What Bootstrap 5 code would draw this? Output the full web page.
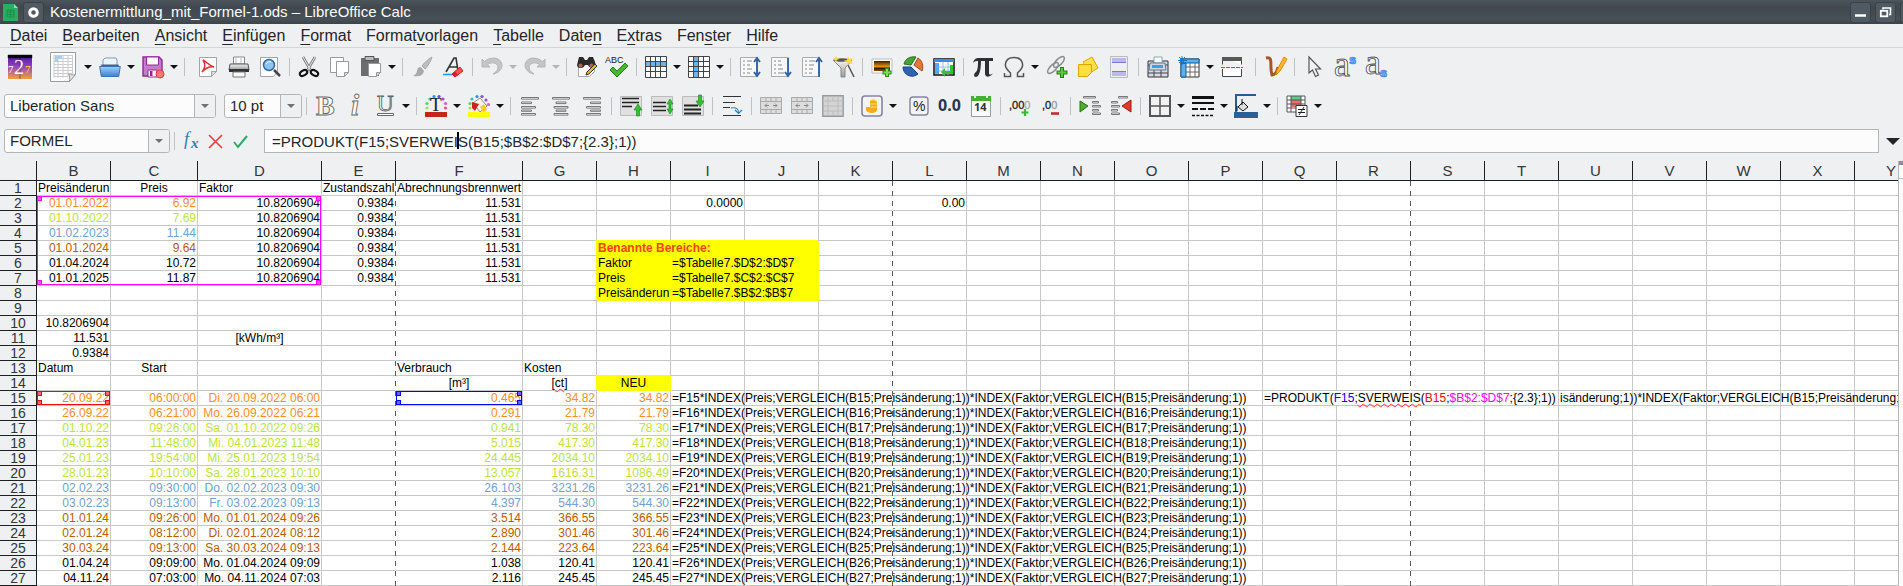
<!DOCTYPE html>
<html lang="de">
<head>
<meta charset="utf-8">
<meta name="viewport" content="width=device-width, initial-scale=1">
<title>Kostenermittlung_mit_Formel-1.ods – LibreOffice Calc</title>
<link href="https://cdn.jsdelivr.net/npm/bootstrap@5.3.0/dist/css/bootstrap.min.css" rel="stylesheet">
<style>
  :root { --chrome:#eff0f1; --ink:#232629; --grid:#c8c8c8; --head:#1d1f21; }
  body { font-family:"Liberation Sans",Arial,sans-serif; color:var(--ink); background:var(--chrome); font-size:15px; line-height:1.2; }
  svg { display:block; overflow:visible; }
  button { border:0; background:transparent; padding:0; color:inherit; }

  .titlebar { height:24px; background:linear-gradient(#4d555c,#40474e 30%,#475057 80%,#3c444b); color:#fcfcfc; padding-left:3px; }
  .wbtn { width:21px; height:21px; border:1px solid #3a4249; border-radius:3px; background:#505a62; }
  .wbtn-end { width:3px; height:21px; border:1px solid #3a4249; border-right:0; border-radius:3px 0 0 3px; background:#505a62; }
  .caption { margin-left:6px; }

  .menubar { height:24px; border-bottom:1px solid #d3d5d7; gap:15px; padding-left:10px; font-size:16px; }
  .menubar a { color:var(--ink); text-decoration:none; }
  .menubar u { text-decoration-thickness:1px; text-underline-offset:3px; }

  .tools { height:39px; padding-bottom:2px; }
  .tools button { height:30px; display:flex; align-items:center; justify-content:center; }
  .tb { width:31px; flex:none; }
  .tb-wide { width:39px; flex:none; }
  .tb-slim { width:30px; flex:none; }
  .dd { width:12px; flex:none; }
  .dd::before, .combo-arrow::before { content:""; border:4px solid transparent; border-top:4px solid #111; border-bottom:0; }
  .dd:disabled::before { border-top-color:#b4b5b6; }
  .combo-arrow::before { border-top-color:#6f7173; }
  .vsep { width:8px; height:18px; flex:none; background:linear-gradient(#bfc1c3,#bfc1c3) center/1px 100% no-repeat; }

  .combo { height:24px; border:1px solid #b3b5b6; border-radius:3px; background:#fcfcfc; overflow:hidden; flex:none; }
  .combo select { appearance:none; border:0; background:transparent; padding:0 5px; flex:1 1 0; min-width:0; color:var(--ink); outline:0; font-size:15px; }
  .combo-arrow { width:21px; border-left:1px solid #b3b5b6; background:var(--chrome); pointer-events:none; }
  .c-font { width:212px; } .c-size { width:78px; } .c-name { width:166px; }

  .formulabar { height:35px; padding:3px 3px 8px 4px; }
  .fx-btn { width:25px; height:24px; flex:none; display:flex; align-items:center; justify-content:center; }
  .fx-edit { position:relative; height:24px; margin-left:11px; border:1px solid #b3b5b6; background:#fcfcfc; flex:1 1 0; min-width:0; }
  .fx-edit input { width:100%; height:22px; border:0; background:transparent; padding:0 7px; font-size:15px; color:var(--ink); outline:0; display:block; }
  .fx-caret { position:absolute; left:192px; top:2px; width:2px; height:17px; background:#000; }
  .expand { width:14px; margin-left:7px; }
  .expand::before { content:""; display:block; border:7px solid transparent; border-top-color:var(--ink); border-bottom:0; }

  .gridwrap { flex:1 1 0; min-width:0; overflow:hidden; background:#fff; }
  .sheet { table-layout:fixed; width:100%; border-collapse:separate; border-spacing:0; font-size:12px; color:#000; }
  .sheet th, .sheet td { height:15px; padding:0; line-height:14px; border-right:1px solid var(--grid); border-bottom:1px solid var(--grid); white-space:nowrap; font-weight:400; }
  .sheet th { background:var(--chrome); border-color:var(--head); color:#31363b; font-size:14px; text-align:center; }
  .sheet thead th { height:20px; line-height:19px; font-size:15px; position:relative; }
  .sheet tr > :last-child { border-right:0; }
  .sheet thead th:last-child { text-align:right; padding-right:2px; }
  .sheet tbody td { padding:0 1px; }
  .sheet .brk { border-right-color:transparent; }
  .sheet thead .brk { border-right-color:var(--head); }
  .sheet thead .brk::after { content:""; position:absolute; right:-1px; top:20px; width:1px; height:405px; z-index:2;
    background:repeating-linear-gradient(#5a5a5a 0 5px,transparent 5px 10px); }
  .num { text-align:right; } .mid { text-align:center; }
  .yel { background:#ff0; border-color:#ff0 !important; box-shadow:-1px -1px 0 #ff0; }
  .sheet td.hd { color:#ff420e; font-weight:700; }
  .k-or { color:#ff8c26; } .k-gr { color:#bbe33d; } .k-bl { color:#729fcf; } .k-br { color:#b85c00; }
  .host { position:relative; }
  .wavy { text-decoration:underline wavy #f33 1px; text-underline-offset:1px; }

  .ref { position:absolute; left:0; top:0; z-index:3; border:1px solid var(--rc); pointer-events:none; }
  .ref i { position:absolute; width:5px; height:5px; background:var(--rf); border:1px solid var(--rc); }
  .ref i:nth-child(1) { left:-1px; top:-1px; } .ref i:nth-child(2) { right:-1px; top:-1px; }
  .ref i:nth-child(3) { left:-1px; bottom:-1px; } .ref i:nth-child(4) { right:-1px; bottom:-1px; }
  .ref-m { --rc:#f0f; --rf:#f5f; width:284px; height:89px; }
  .ref-r { --rc:#f00; --rf:#f66; width:73px; height:14px; }
  .ref-b { --rc:#00f; --rf:#66f; width:126px; height:14px; }
  .editor { position:absolute; left:0; top:0; z-index:3; width:294px; height:14px; padding-left:1px; background:#fff; color:#000; }

  .scroller { width:5px; flex:none; border-left:1px solid #b3b5b6; background:#fcfcfc; }
  .scroller .knob { height:4px; background:#8d8f91; }
  .scroller .step { height:14px; border-bottom:1px solid #c4c6c8; }
</style>
</head>
<body class="overflow-hidden">

<svg width="0" height="0" class="position-absolute" aria-hidden="true">
  <defs>
    <linearGradient id="gBlue" x2="0" y2="1"><stop stop-color="#9fd0fa"/><stop offset="1" stop-color="#3c80cf"/></linearGradient>
    <linearGradient id="gGrey" x2="0" y2="1"><stop stop-color="#f4f4f4"/><stop offset="1" stop-color="#9a9a9a"/></linearGradient>
    <linearGradient id="gSun" x2="0" y2="1"><stop stop-color="#4a10a0"/><stop offset=".45" stop-color="#8f3fc0"/><stop offset="1" stop-color="#f0a040"/></linearGradient>
    <linearGradient id="gDusk" x2="0" y2="1"><stop stop-color="#3a2000"/><stop offset=".6" stop-color="#f39a10"/><stop offset=".7" stop-color="#221500"/><stop offset="1" stop-color="#8a4f00"/></linearGradient>
  </defs>
</svg>

<header>
  <div class="titlebar d-flex align-items-center">
    <svg width="16" height="19" viewBox="0 0 16 19"><path d="M0 1h11l4 4v13H0z" fill="#27ae60"/><path d="M11 1l4 4h-4z" fill="#8fdcb0"/><path d="M4 7h7v7H4zM4 9h7M4 11.500h7M7.500 7v7" fill="none" stroke="#1c8f4c"/></svg>
    <button class="wbtn ms-1 d-flex align-items-center justify-content-center" aria-label="Fenstermenü"><svg width="11" height="11" viewBox="0 0 11 11"><circle cx="5.500" cy="5.500" r="3.800" fill="none" stroke="#fff" stroke-width="3"/></svg></button>
    <span class="caption flex-grow-1">Kostenermittlung_mit_Formel-1.ods – LibreOffice Calc</span>
    <button class="wbtn me-1 d-flex align-items-center justify-content-center" aria-label="Minimieren"><svg width="13" height="13" viewBox="0 0 13 13"><path d="M1 9.500h11" stroke="#fff" stroke-width="2.500"/></svg></button>
    <button class="wbtn me-1 d-flex align-items-center justify-content-center" aria-label="Wiederherstellen"><svg width="13" height="13" viewBox="0 0 13 13" fill="none" stroke="#fff"><path d="M4 3.500V2h7.500v6.500H10" stroke-width="1.600"/><rect x="1.800" y="4.800" width="6.500" height="5.500" stroke-width="1.800"/></svg></button>
    <div class="wbtn-end"></div>
  </div>

  <nav class="menubar d-flex align-items-center">
    <a href="#"><u>D</u>atei</a><a href="#"><u>B</u>earbeiten</a><a href="#"><u>A</u>nsicht</a><a href="#"><u>E</u>infügen</a><a href="#"><u>F</u>ormat</a><a href="#">Format<u>v</u>orlagen</a><a href="#"><u>T</u>abelle</a><a href="#">Date<u>n</u></a><a href="#">E<u>x</u>tras</a><a href="#">Fen<u>s</u>ter</a><a href="#"><u>H</u>ilfe</a>
  </nav>
</header>

<!-- Standard toolbar -->
<div class="tools d-flex align-items-center ps-1" role="toolbar" aria-label="Standard">
  <button class="tb" aria-label="727"><svg width="24" height="24" viewBox="0 0 24 24"><path fill="url(#gSun)" d="M0 0h24v24H0z"/><path d="M0 0h24v3H0zM12 0v24" stroke="#201030" stroke-width=".5"/><text x="6" y="19" font-family="Liberation Serif" font-size="20" fill="#fff">2</text><text x="0" y="18" font-family="Liberation Serif" font-size="11" fill="#fff">7</text><text x="17" y="18" font-family="Liberation Serif" font-size="11" fill="#ffe020">7</text></svg></button>
  <button class="tb-wide ms-2" aria-label="Neu"><svg width="26" height="30" viewBox="0 0 26 30"><path d="M.5.500h25v22l-6 7H.5z" fill="#fdfdfd" stroke="#9a9c9e"/><path d="M4 3.500h19M4 6.500h19M4 9.500h19M4 12.500h19M4 15.500h19M4 18.500h19M4 21.500h18M4 24.500h14M4 3v23M8 3v23M13 3v23M18 3v21M22.500 3v19" stroke="#ccc" fill="none"/><path d="M5 4h7v3H8v3H5z" fill="#a8cdf2"/><path d="M19.500 29.500c.5-3 0-6-1-7.500 2 1 5 1.200 7 .5z" fill="#e8e8e8" stroke="#9a9c9e"/></svg></button><button class="dd" aria-label="Neu, Auswahl"></button>
  <button class="tb" aria-label="Öffnen"><svg width="22" height="22" viewBox="0 0 22 22"><path d="M6 2h11l1 2v8H4V4z" fill="#eef4fb" stroke="#7a9cc4"/><path d="M2.500 8.500h17l1 4H1.500z" fill="#555f6c"/><path d="M.7 10.500h20.600l-1.600 10H2.300z" fill="url(#gBlue)" stroke="#3b72b8"/></svg></button><button class="dd" aria-label="Öffnen, Auswahl"></button>
  <button class="tb" aria-label="Speichern"><svg width="22" height="22" viewBox="0 0 22 22"><path d="M1 1h16l3 3v16H1z" fill="#c77bcb" stroke="#8e2a98" stroke-width="1.400"/><path d="M4.500 1v8h12V1z" fill="#fff" stroke="#8e2a98"/><path d="M6 21v-7h9v7z" fill="#fff" stroke="#8e2a98"/><path d="M8 15h2.500v5H8z" fill="#8e2a98"/><circle cx="18" cy="18" r="4" fill="#f77" stroke="#e33"/></svg></button><button class="dd" aria-label="Speichern, Auswahl"></button>
  <div class="vsep"></div>
  <button class="tb ms-1" aria-label="PDF"><svg width="22" height="22" viewBox="0 0 22 22"><path d="M2.500 1.500h17v14l-5 5h-12z" fill="#fff" stroke="#a2a4a6"/><path d="M6 4c4 2 5 5 11 7-5-1-8 1-12 5 3-4 4-7 1-12" fill="none" stroke="#e03030" stroke-width="1.500"/><path d="M14.500 20.500v-5h5z" fill="#ddd" stroke="#a2a4a6"/></svg></button>
  <button class="tb" aria-label="Drucken"><svg width="22" height="22" viewBox="0 0 22 22"><path d="M5.500 1h11v7h-11z" fill="#fff" stroke="#888"/><path d="M8 2v5M13 2v5" stroke="#ddd" stroke-width="2"/><path d="M2 8h18l1 6H1z" fill="url(#gGrey)" stroke="#555"/><path d="M1 13h20v3H1z" fill="#333"/><path d="M5 16h12v5H5z" fill="#f8f8f8" stroke="#777"/></svg></button>
  <button class="tb" aria-label="Druckvorschau"><svg width="22" height="22" viewBox="0 0 22 22"><path d="M1.500 1.500h17v14l-4 5h-13z" fill="#fff" stroke="#a2a4a6"/><path d="M15 14l6 6" stroke="#444" stroke-width="2.500"/><circle cx="10" cy="9" r="5.500" fill="#8cc6f0" stroke="#34699e" stroke-width="1.500"/><path d="M7 8c1-2 3-3 5-2" stroke="#fff" fill="none"/></svg></button>
  <div class="vsep"></div>
  <button class="tb" aria-label="Ausschneiden"><svg width="22" height="22" viewBox="0 0 22 22"><path d="M5 1l8 14M17 1L9 15" stroke="#777" stroke-width="2.600"/><path d="M5 1l8 14M17 1L9 15" stroke="#eee"/><ellipse cx="5.500" cy="17" rx="4" ry="2.500" transform="rotate(-30 5.500 17)" fill="none" stroke="#111" stroke-width="2"/><ellipse cx="16.500" cy="17" rx="4" ry="2.500" transform="rotate(30 16.500 17)" fill="none" stroke="#111" stroke-width="2"/></svg></button>
  <button class="tb" aria-label="Kopieren"><svg width="22" height="22" viewBox="0 0 22 22" fill="#fff" stroke="#999"><path d="M1.500 1.500h13v11l-4 4h-9z"/><path d="M7.500 5.500h12v11l-4 4h-8z"/><path d="M15.500 20.500v-4h4z" fill="#ddd"/></svg></button>
  <button class="tb" aria-label="Einfügen"><svg width="22" height="22" viewBox="0 0 22 22"><path d="M1 2h18v18H1z" fill="#6b6d6f"/><path d="M5 .5h9v4H5z" fill="#bbb" stroke="#555"/><path d="M8.500 7.500h12v9l-4 4h-8z" fill="#fff" stroke="#999"/><path d="M16.500 20.500v-4h4z" fill="#ddd" stroke="#999"/></svg></button><button class="dd" aria-label="Einfügen, Auswahl"></button>
  <div class="vsep"></div>
  <button class="tb" aria-label="Format übertragen"><svg width="22" height="22" viewBox="0 0 22 22"><path d="M21 1c-4 2-8 6-10 9l3 3c3-3 6-8 7-12z" fill="#bdbdbd" stroke="#aaa"/><path d="M10 11c-3 0-4 2-4 4s-2 4-4 5c5 1 10 0 11-5z" fill="#a9a9a9"/></svg></button>
  <button class="tb" aria-label="Formatierung löschen"><svg width="22" height="22" viewBox="0 0 22 22"><path d="M4 16L12 2h2l2 13M7 11h8" stroke="#333" stroke-width="1.600" fill="none"/><path d="M1 18.500h9" stroke="#1d99f3" stroke-width="1.500"/><path d="M10 18l8-7 3 4-8 6z" fill="#ef5350" stroke="#d22"/><path d="M10 18l3-2.500 3 3.500-3 2z" fill="#c62828"/></svg></button>
  <div class="vsep"></div>
  <button class="tb" disabled aria-label="Rückgängig"><svg width="24" height="20" viewBox="0 0 24 20"><path d="M2 2v8h8L7.500 7.500C11 5 17 5 18 10c0 3-2 5-5 7 6-1 9-5 9-9C21 0 11-1 4.500 4.500z" fill="#c4c5c6" stroke="#b4b5b6"/></svg></button><button class="dd" disabled aria-label="Rückgängig, Liste"></button>
  <button class="tb" disabled aria-label="Wiederholen"><svg width="24" height="20" viewBox="0 0 24 20"><path transform="translate(24) scale(-1 1)" d="M2 2v8h8L7.500 7.500C11 5 17 5 18 10c0 3-2 5-5 7 6-1 9-5 9-9C21 0 11-1 4.500 4.500z" fill="#c4c5c6" stroke="#b4b5b6"/></svg></button><button class="dd" disabled aria-label="Wiederholen, Liste"></button>
  <div class="vsep"></div>
  <button class="tb" aria-label="Suchen"><svg width="22" height="22" viewBox="0 0 22 22"><path d="M3.500 4.500h16v11l-5 5h-11z" fill="#fff" stroke="#aaa"/><path d="M4 1h4l2 3h2l2-3h4l3 8c0 4-7 4-8 0h-3c-1 4-8 4-8 0z" fill="#2a2a2a"/><circle cx="5.500" cy="9.500" r="2" fill="#a06a50"/><circle cx="16.500" cy="9.500" r="2" fill="#a06a50"/><path d="M11 19l1-3 8-8 2 2-8 8z" fill="#f7b21a" stroke="#333"/></svg></button>
  <button class="tb" aria-label="Rechtschreibung"><svg width="22" height="22" viewBox="0 0 22 22"><text x="-1" y="7" font-size="9" fill="#222">ABC</text><path d="M4 14l3-3 4 4 8-8 3 3-11 11z" fill="#45b82c" stroke="#2c7d1c"/></svg></button>
  <div class="vsep"></div>
  <button class="tb" aria-label="Zeile"><svg width="22" height="22" viewBox="0 0 22 22"><path d="M.5.500h21v21H.5z" fill="#fff"/><path d="M1 6h20v5H1z" fill="#6fb3e8"/><path d="M.5.500h21v21H.5zM1 5.500h20M1 10.500h20M1 15.500h20M5.500 1v20M10.500 1v20M15.500 1v20" fill="none" stroke="#444"/></svg></button><button class="dd" aria-label="Zeile, Auswahl"></button>
  <button class="tb" aria-label="Spalte"><svg width="22" height="22" viewBox="0 0 22 22"><path d="M.5.500h21v21H.5z" fill="#fff"/><path d="M6 1h5v20H6z" fill="#6fb3e8"/><path d="M.5.500h21v21H.5zM1 5.500h20M1 10.500h20M1 15.500h20M5.500 1v20M10.500 1v20M15.500 1v20" fill="none" stroke="#444"/></svg></button><button class="dd" aria-label="Spalte, Auswahl"></button>
  <div class="vsep"></div>
  <button class="tb" aria-label="Sortieren"><svg width="22" height="22" viewBox="0 0 22 22"><path d="M1.500 1.500h17v19h-17z" fill="#f8f8f8" stroke="#aaa"/><path d="M4 5h2m2 0h5M4 9h2m2 0h3M4 13h2m2 0h5M4 17h2m2 0h3" stroke="#888"/><path d="M18 4v14M15 6l3-4 3 4M15 16l3 4 3-4" fill="none" stroke="#2a5fa8" stroke-width="1.800"/></svg></button>
  <button class="tb" aria-label="Aufsteigend"><svg width="22" height="22" viewBox="0 0 22 22"><path d="M1.500 1.500h17v19h-17z" fill="#f8f8f8" stroke="#aaa"/><path d="M4 5h2m2 0h3M4 9h2m2 0h4M4 13h2m2 0h5M4 17h2m2 0h6" stroke="#888"/><path d="M18 2v16M15 16l3 4 3-4" fill="none" stroke="#2a5fa8" stroke-width="1.800"/></svg></button>
  <button class="tb" aria-label="Absteigend"><svg width="22" height="22" viewBox="0 0 22 22"><path d="M1.500 1.500h17v19h-17z" fill="#f8f8f8" stroke="#aaa"/><path d="M4 5h2m2 0h6M4 9h2m2 0h5M4 13h2m2 0h4M4 17h2m2 0h3" stroke="#888"/><path d="M18 4v17M15 6l3-4 3 4" fill="none" stroke="#2a5fa8" stroke-width="1.800"/></svg></button>
  <button class="tb" aria-label="AutoFilter"><svg width="22" height="22" viewBox="0 0 22 22"><path d="M1 4h19l-7 8v9H9v-9z" fill="url(#gGrey)" stroke="#888"/><ellipse cx="10" cy="4" rx="8" ry="1.800" fill="#555"/><path d="M16 9l6 12" stroke="#555" stroke-width="1.500"/><path d="M16 0l1 3 4-1-2 3 2 3-4-1-2 3v-4l-4-1 4-1zM4 0l1 2 2 1-2 1-1 2-1-2-2-1 2-1z" fill="#ffd93b"/></svg></button>
  <div class="vsep"></div>
  <button class="tb" aria-label="Bild"><svg width="22" height="22" viewBox="0 0 22 22"><path d="M1 3h20v14H1z" fill="#fff" stroke="#bbb"/><path d="M3 5h16v10H3z" fill="url(#gDusk)"/><path d="M16 12v9M11.500 16.500h9" stroke="#2f8d1c" stroke-width="4"/><path d="M16 13v7M12.500 16.500h7" stroke="#7fe04f" stroke-width="2"/></svg></button>
  <button class="tb" aria-label="Diagramm"><svg width="22" height="22" viewBox="0 0 22 22"><path d="M9 9L2 8C3 3 8 0 14 1z" fill="#43a535" stroke="#2a6e20"/><path d="M12 9l4-7c4 2 6 8 4 13z" fill="#e2783a" stroke="#a5451a"/><path d="M9 11l7 7c-6 5-15 1-15-7z" fill="#2f64b5" stroke="#1c3f78"/></svg></button>
  <button class="tb" aria-label="Pivot-Tabelle"><svg width="22" height="22" viewBox="0 0 22 22"><path d="M1 3h20v16H1z" fill="#fff" stroke="#111" stroke-width="1.500"/><path d="M1 3h20v3H1z" fill="#3b8be8"/><path d="M2 7h4v11H2z" fill="#5aa5f5"/><path d="M6 11h14M6 15h14M10 6v13M15 6v13" stroke="#9ab8e8"/><path d="M8 16l4-4v3h5V9h3v9h-8v3z" fill="#34c52c"/></svg></button>
  <div class="vsep"></div>
  <button class="tb" aria-label="Formelobjekt"><svg width="22" height="22" viewBox="0 0 22 22"><path d="M1 7c1-4 3-5 6-5h14v3h-4v12c0 2 2 2 4 0-1 3-7 6-8 1V5H9c0 6-1 16-5 16-3 0-2-4 0-5 2-2 2-7 2-11-2 0-3 0-5 2z" fill="#2b3035"/></svg></button>
  <button class="tb" aria-label="Sonderzeichen"><svg width="22" height="22" viewBox="0 0 22 22"><path d="M1.500 17v3.500h6V17C3 13 2 10 2.500 8 3 4 6 1.500 11 1.500S19 4 19.500 8c.5 2-.5 5-5 9v3.500h6V17" fill="none" stroke="#555" stroke-width="1.500"/></svg></button><button class="dd" aria-label="Sonderzeichen, Auswahl"></button>
  <button class="tb" aria-label="Hyperlink"><svg width="22" height="22" viewBox="0 0 22 22"><g fill="none" stroke="#8a8c8e" stroke-width="1.500"><ellipse cx="13" cy="6" rx="7" ry="3" transform="rotate(-45 13 6)"/><ellipse cx="7" cy="12" rx="7" ry="3" transform="rotate(-45 7 12)"/></g><path d="M16 11v11M10.500 16.500h11" stroke="#287d1c" stroke-width="4"/><path d="M16 12v9M11.500 16.500h9" stroke="#58cc3f" stroke-width="2"/></svg></button>
  <button class="tb" aria-label="Kommentar"><svg width="22" height="22" viewBox="0 0 22 22" stroke="#d8a800"><path d="M6 6l9-5 6 11-8 5z" fill="#ffe14d"/><path d="M1.500 8.500h13v8l-4 4h-9z" fill="#ffdf3f"/></svg></button>
  <button class="tb" aria-label="Kopf- und Fußzeile"><svg width="22" height="22" viewBox="0 0 22 22"><path d="M2.500.500h17v21h-17z" fill="#eee" stroke="#bbb"/><path d="M4 2h14v4H4zM4 16h14v4H4z" fill="#b9b9ea"/><path d="M4 6.500h14M4 15.500h14" stroke="#7a7acd"/></svg></button>
  <div class="vsep"></div>
  <button class="tb" aria-label="Druckbereich"><svg width="22" height="22" viewBox="0 0 22 22"><path d="M1 5h20v16H1z" fill="#d9d9ec" stroke="#333"/><path d="M1 17h20M7 5v16M14 5v16M1 9h20" stroke="#444"/><path d="M7 1h8v6H7z" fill="#fff" stroke="#8aa"/><path d="M3 7h15l1 7H2z" fill="#ccd8e6" stroke="#678"/><path d="M5 9h11v3H5z" fill="#3d9cf0"/></svg></button>
  <button class="tb" aria-label="Fixieren"><svg width="22" height="22" viewBox="0 0 22 22"><path d="M3 3h18v18H3z" fill="#fff" stroke="#333"/><path d="M3 3h18v4H3zM3 7h5v14H3z" fill="#5eaee8" stroke="#0c5fa5"/><path d="M8 11h13M8 16h13M12 7v14M17 7v14" stroke="#666"/><path d="M4 0v9M0 4.500h9M1 1l6 6M7 1L1 7" stroke="#1377c9"/></svg></button><button class="dd" aria-label="Fixieren, Auswahl"></button>
  <button class="tb" aria-label="Fenster teilen"><svg width="22" height="22" viewBox="0 0 22 22"><path d="M1.500 1.500h19v7M1.500 8.500v-7M1.500 13v7.500h19V13" fill="#fff" stroke="#444"/><path d="M1 1h20v4H1z" fill="#555b50"/><path d="M0 11.500h22" stroke="#2980b9" stroke-dasharray="4 1"/></svg></button>
  <div class="vsep ms-1"></div>
  <button class="tb" aria-label="Zeichnen"><svg width="22" height="22" viewBox="0 0 22 22"><path d="M2 2c8-2 3 8 6 17 3 0 5-4 6-8" fill="none" stroke="#a8542a" stroke-width="3"/><path d="M12 19l1-5 7-13 3 2-7 12z" fill="#ffb62e" stroke="#e08a00"/></svg></button>
  <div class="vsep"></div>
  <button class="tb" aria-label="Auswählen"><svg width="22" height="22" viewBox="0 0 22 22"><path d="M6 1v16l3.500-3 3 6.500 3-1.500-3-6h5z" fill="#f2f2f2" stroke="#555" stroke-width="1.200"/></svg></button>
  <button class="tb" aria-label="Hochgestellt"><svg width="22" height="22" viewBox="0 0 22 22"><text x="0" y="20" font-family="Liberation Serif" font-size="36" fill="#fff" stroke="#555" stroke-width=".9">a</text><text x="15" y="8" font-size="13" font-weight="700" fill="#8ec0ff" stroke="#2a7df0" stroke-width=".7">s</text></svg></button>
  <button class="tb" aria-label="Tiefgestellt"><svg width="22" height="22" viewBox="0 0 22 22"><text x="0" y="18" font-family="Liberation Serif" font-size="36" fill="#fff" stroke="#555" stroke-width=".9">a</text><text x="15" y="21" font-size="13" font-weight="700" fill="#8ec0ff" stroke="#2a7df0" stroke-width=".7">s</text></svg></button>
</div>

<!-- Formatting toolbar -->
<div class="tools d-flex align-items-center ps-1" role="toolbar" aria-label="Formatierung">
  <div class="combo c-font d-flex"><select aria-label="Schriftname"><option>Liberation Sans</option></select><span class="combo-arrow d-flex align-items-center justify-content-center"></span></div>
  <div class="combo c-size d-flex ms-2"><select aria-label="Schriftgröße"><option>10 pt</option></select><span class="combo-arrow d-flex align-items-center justify-content-center"></span></div>
  <div class="vsep"></div>
  <button class="tb-slim" aria-label="Fett"><svg width="22" height="22" viewBox="0 0 22 22"><text x="2" y="20" font-family="Liberation Serif" font-weight="700" font-size="28" fill="#fff" stroke="#666" stroke-width=".9">B</text></svg></button>
  <button class="tb-slim" aria-label="Kursiv"><svg width="22" height="22" viewBox="0 0 22 22"><text x="7" y="20" font-family="Liberation Serif" font-style="italic" font-weight="700" font-size="29" fill="#fff" stroke="#666" stroke-width=".9">i</text></svg></button>
  <button class="tb-slim" aria-label="Unterstrichen"><svg width="22" height="22" viewBox="0 0 22 22" fill="#fff" stroke="#666"><text x="3" y="16" font-family="Liberation Serif" font-size="23" stroke-width=".9">U</text><path d="M3.500 18.500h16v2h-16z"/></svg></button><button class="dd" aria-label="Unterstrichen, Auswahl"></button>
  <div class="vsep"></div>
  <button class="tb" aria-label="Schriftfarbe"><svg width="22" height="22" viewBox="0 0 22 22"><g stroke="none"><circle cx="2" cy="13" r="1.600" fill="#a4e04a"/><circle cx="2" cy="8.500" r="1.600" fill="#4fd85a"/><circle cx="5" cy="4" r="1.600" fill="#35c5b0"/><circle cx="9" cy="1.500" r="1.600" fill="#3b8be0"/><circle cx="14" cy="1.500" r="1.600" fill="#5b50d0"/><circle cx="18" cy="4" r="1.600" fill="#9a4fd0"/><circle cx="20.500" cy="8.500" r="1.600" fill="#d85fc0"/><circle cx="20.500" cy="13" r="1.600" fill="#f0508a"/></g><text x="5" y="16" font-family="Liberation Serif" font-size="19" fill="#222">T</text><path d="M0 17h22v5H0z" fill="#c9211e"/></svg></button><button class="dd" aria-label="Schriftfarbe, Auswahl"></button>
  <button class="tb" aria-label="Hintergrundfarbe"><svg width="22" height="22" viewBox="0 0 22 22"><circle cx="2" cy="13" r="1.600" fill="#a4e04a"/><circle cx="2" cy="8.500" r="1.600" fill="#4fd85a"/><circle cx="4" cy="4" r="1.600" fill="#35c5b0"/><circle cx="9" cy="1.500" r="1.600" fill="#3b8be0"/><circle cx="14" cy="1.500" r="1.600" fill="#7b50d0"/><circle cx="18" cy="5" r="1.600" fill="#9a4fd0"/><circle cx="20.500" cy="9.500" r="1.600" fill="#d85fc0"/><path d="M5 8l7-5 7 8-7 6z" fill="#fdf6e8" stroke="#a08868"/><path d="M4 7l7 2-4 7-3-3z" fill="#c22"/><path d="M12 12l4-3 3 6-4 2z" fill="#ffc928"/><path d="M0 17h22v5H0z" fill="#ff0"/></svg></button><button class="dd" aria-label="Hintergrundfarbe, Auswahl"></button>
  <div class="vsep"></div>
  <button class="tb" aria-label="Linksbündig"><svg width="20" height="20" viewBox="0 0 20 20" fill="#fff" stroke="#777"><path d="M1.500 1.500h17v1.600h-17zM1.500 6h10v1.600h-10zM1.500 10.500h14v1.600h-14zM1.500 14h10v1.300h-10zM1.500 17.500h14v1.600h-14z"/></svg></button>
  <button class="tb" aria-label="Zentriert"><svg width="20" height="20" viewBox="0 0 20 20" fill="#fff" stroke="#777"><path d="M1.500 1.500h17v1.600h-17zM5 6h10v1.600H5zM3 10.500h14v1.600H3zM5 14h10v1.300H5zM3 17.500h14v1.600H3z"/></svg></button>
  <button class="tb" aria-label="Rechtsbündig"><svg width="20" height="20" viewBox="0 0 20 20" fill="#fff" stroke="#777"><path d="M1.500 1.500h17v1.600h-17zM8.500 6h10v1.600h-10zM4.500 10.500h14v1.600h-14zM8.500 14h10v1.300h-10zM4.500 17.500h14v1.600h-14z"/></svg></button>
  <div class="vsep"></div>
  <button class="tb" aria-label="Oben ausrichten"><svg width="22" height="22" viewBox="0 0 22 22"><path d="M.5 1.500h21v19H.5z" fill="#e0e0e0" stroke="#bbb"/><path d="M2 3.500h17M2 7.500h17M2 11.500h10" stroke="#222" stroke-width="1.500"/><path d="M16.500 21v-6H14l4-6 4 6h-2.500v6z" fill="#2fc32f" stroke="#178017" stroke-width=".6"/></svg></button>
  <button class="tb" aria-label="Vertikal zentrieren"><svg width="22" height="22" viewBox="0 0 22 22"><path d="M.5 1.500h21v19H.5z" fill="#e0e0e0" stroke="#bbb"/><path d="M2 7.500h13M2 11.500h13M2 15.500h13" stroke="#222" stroke-width="1.500"/><path d="M19 4l3 5h-2v5h2l-3 5-3-5h2V9h-2z" fill="#2fc32f" stroke="#178017" stroke-width=".6"/></svg></button>
  <button class="tb" aria-label="Unten ausrichten"><svg width="22" height="22" viewBox="0 0 22 22"><path d="M.5 1.500h21v19H.5z" fill="#e0e0e0" stroke="#bbb"/><path d="M2 10.500h14M2 14.500h17M2 18.500h17" stroke="#222" stroke-width="1.800"/><path d="M16.500 0v6H14l4 6 4-6h-2.500V0z" fill="#2fc32f" stroke="#178017" stroke-width=".6"/></svg></button>
  <div class="vsep"></div>
  <button class="tb" aria-label="Umbrechen"><svg width="22" height="22" viewBox="0 0 22 22" fill="none"><path d="M2 1.500h18M2 7.500h12M2 12.500h7M2 20.500h18" stroke="#333"/><path d="M10 13c5-1 8 1 7.500 5M14 15l3.500 3.500L21 15" stroke="#2980b9" stroke-width="1.200"/></svg></button>
  <div class="vsep"></div>
  <button class="tb" disabled aria-label="Verbinden und zentrieren"><svg width="22" height="18" viewBox="0 0 22 18"><path d="M.5.500h21v16H.5z" fill="#ddd" stroke="#aaa"/><path d="M.5 4.500h21M.5 12.500h21M6 .5v4M11 .5v4M16 .5v4M6 12.500v4M11 12.500v4M16 12.500v4" stroke="#aaa"/><path d="M9 8.500H5l2-2M5 8.500l2 2M13 8.500h4l-2-2M17 8.500l-2 2" stroke="#888" fill="none"/></svg></button>
  <button class="tb" disabled aria-label="Verbinden"><svg width="22" height="18" viewBox="0 0 22 18"><path d="M.5.500h21v16H.5z" fill="#ddd" stroke="#aaa"/><path d="M.5 4.500h21M.5 12.500h21M6 .5v4M11 .5v4M16 .5v4M6 12.500v4M11 12.500v4M16 12.500v4" stroke="#aaa"/><path d="M9 8.500H5l2-2M5 8.500l2 2M13 8.500h4l-2-2M17 8.500l-2 2" stroke="#888" fill="none"/></svg></button>
  <button class="tb" disabled aria-label="Teilen"><svg width="22" height="22" viewBox="0 0 22 22"><path d="M.8.800h20.400v20.400H.8z" fill="#d4d4d4" stroke="#999" stroke-width="1.400"/><path d="M1 6h20M1 11h20M1 16h20M6 1v20M11 1v5M16 1v20M11 16v5" stroke="#bcbcbc"/></svg></button>
  <div class="vsep"></div>
  <button class="tb" aria-label="Währung"><svg width="22" height="22" viewBox="0 0 22 22"><rect x="1" y="1" width="20" height="20" rx="3" fill="#f4f4f8" stroke="#8484a0" stroke-width="1.600"/><path d="M5 12h4V6c3-3 7-1 7 1v8c0 4-10 4-11 0z" fill="#f6ab13"/><path d="M9 6c2-2 6-1 7 1M9 9h7M9 12h7" stroke="#ffe27a" fill="none"/></svg></button><button class="dd" aria-label="Währung, Auswahl"></button>
  <button class="tb ms-1" aria-label="Prozent"><svg width="22" height="22" viewBox="0 0 22 22"><rect x="2" y="2" width="18" height="18" rx="3" fill="#f4f4f8" stroke="#8484a0" stroke-width="1.400"/><text x="5" y="16" font-size="14" fill="#222">%</text></svg></button>
  <button class="tb" aria-label="Zahl"><svg width="22" height="22" viewBox="0 0 22 22"><text x="-1" y="16" font-family="Open Sans" font-weight="700" font-size="16" fill="#24394c">0.0</text></svg></button>
  <button class="tb" aria-label="Datum"><svg width="22" height="22" viewBox="0 0 22 22"><path d="M1.500 3.500h19v18h-19z" fill="#fafafa" stroke="#999"/><path d="M1 1h20v5H1z" fill="#43b02e"/><path d="M5 0v3M17 0v3" stroke="#ddf5d5" stroke-width="2"/><text x="4" y="16" font-family="Open Sans" font-weight="700" font-size="11" fill="#333">14</text></svg></button>
  <div class="vsep"></div>
  <button class="tb" aria-label="Dezimalstelle hinzufügen"><svg width="22" height="22" viewBox="0 0 22 22"><text x="0" y="14" font-size="11" fill="#222" stroke="#222" stroke-width=".3">,00<tspan fill="#aaa" stroke="#aaa">0</tspan></text><path d="M16 14v7M12.500 17.500h7" stroke="#2fc02f" stroke-width="2.200"/></svg></button>
  <button class="tb" aria-label="Dezimalstelle löschen"><svg width="22" height="22" viewBox="0 0 22 22"><text x="2" y="14" font-size="11" fill="#222" stroke="#222" stroke-width=".3">,0<tspan fill="#999" stroke="#999">0</tspan></text><path d="M11 18.500h8" stroke="#c9211e" stroke-width="2.500"/></svg></button>
  <div class="vsep"></div>
  <button class="tb" aria-label="Einzug vergrößern"><svg width="22" height="22" viewBox="0 0 22 22"><path d="M1 6l8 5-8 6z" fill="#4caf2c" stroke="#287018"/><path d="M4.500 1.500h12v1.500h-12zM13.500 6.500h6V8h-6zM13.500 10.500h8V12h-8zM13.500 14.500h6V16h-6zM13.500 18h8v1.500h-8z" fill="#fff" stroke="#777"/></svg></button>
  <button class="tb" aria-label="Einzug verkleinern"><svg width="22" height="22" viewBox="0 0 22 22"><path d="M21 5v12l-9-6z" fill="#e23b2e" stroke="#961a12"/><path d="M8.500 1.500h9V3h-9zM1.500 6.500h6V8h-6zM1.500 10.500h8V12h-8zM1.500 14.500h6V16h-6zM1.500 18h8v1.500h-8z" fill="#fff" stroke="#777"/></svg></button>
  <div class="vsep"></div>
  <button class="tb" aria-label="Rahmen"><svg width="22" height="22" viewBox="0 0 22 22"><path d="M1 1h20v20H1z" fill="#f2f2f2" stroke="#555" stroke-width="2"/><path d="M11 1v20M1 11h20" stroke="#555" stroke-width="1.500"/></svg></button><button class="dd" aria-label="Rahmen, Auswahl"></button>
  <button class="tb" aria-label="Rahmenart"><svg width="22" height="22" viewBox="0 0 22 22" stroke="#111"><path d="M0 2.500h22" stroke-width="3"/><path d="M0 8h22" stroke-width="2"/><path d="M0 14h22" stroke-width="2" stroke-dasharray="6 2"/><path d="M0 20.500h22" stroke-width="1.500" stroke-dasharray="3 1.500"/></svg></button><button class="dd" aria-label="Rahmenart, Auswahl"></button>
  <button class="tb" aria-label="Rahmenfarbe"><svg width="24" height="24" viewBox="0 0 24 24"><path d="M2 18V1h20" fill="none" stroke="#2b5c8f" stroke-width="2"/><path d="M4 13l5-5 5 5-5 4z" fill="#ddd" stroke="#111"/><path d="M8 11V5M3 12v5" stroke="#111"/><path d="M0 18h24v6H0z" fill="#2a6099"/></svg></button><button class="dd" aria-label="Rahmenfarbe, Auswahl"></button>
  <div class="vsep"></div>
  <button class="tb" aria-label="Bedingte Formatierung"><svg width="22" height="22" viewBox="0 0 22 22"><path d="M1 1h18v16H1z" fill="#fff"/><path d="M5 1h10v4H5z" fill="#5dc98a"/><path d="M5 5h10v7H5z" fill="#ee6c6c"/><path d="M1 1h18v16H1zM1 5h18M1 9h18M1 13h18M5 1v16M15 1v16" fill="none" stroke="#555"/><path d="M10 10.500h11v11H10z" fill="#fff" stroke="#333"/><path d="M12 14.500h7M12 17.500h7M18 12l-5 8" stroke="#222"/></svg></button><button class="dd" aria-label="Bedingte Formatierung, Auswahl"></button>
</div>

<!-- Formula bar -->
<div class="formulabar d-flex align-items-center">
  <div class="combo c-name d-flex"><select aria-label="Namenfeld"><option>FORMEL</option></select><span class="combo-arrow d-flex align-items-center justify-content-center"></span></div>
  <div class="vsep"></div>
  <button class="fx-btn" aria-label="Funktions-Assistent"><svg width="16" height="18" viewBox="0 0 16 18"><text x="1" y="13" font-family="Liberation Serif" font-style="italic" font-size="18" fill="#2980b9">f</text><text x="8" y="16" font-family="Liberation Serif" font-style="italic" font-weight="700" font-size="15" fill="#2980b9">x</text></svg></button>
  <button class="fx-btn" aria-label="Verwerfen"><svg width="15" height="15" viewBox="0 0 15 15"><path d="M1 1l13 13M14 1L1 14" stroke="#e83c3c" stroke-width="1.600"/></svg></button>
  <button class="fx-btn" aria-label="Übernehmen"><svg width="15" height="15" viewBox="0 0 15 15"><path d="M1 8l4 5L14 2" fill="none" stroke="#27ae60" stroke-width="2"/></svg></button>
  <div class="fx-edit"><input type="text" aria-label="Formel" value="=PRODUKT(F15;SVERWEIS(B15;$B$2:$D$7;{2.3};1))"><span class="fx-caret"></span></div>
  <button class="expand" aria-label="Eingabezeile aufklappen"></button>
</div>

<!-- Sheet -->
<main class="d-flex">
  <div class="gridwrap">
    <table class="sheet">
      <colgroup id="cols"></colgroup>
      <thead><tr id="heads"></tr></thead>
      <tbody id="rows"></tbody>
    </table>
  </div>
  <div class="scroller"><div class="knob"></div><div class="step"></div></div>
</main>

<script src="https://cdn.jsdelivr.net/npm/bootstrap@5.3.0/dist/js/bootstrap.bundle.min.js"></script>
<script>
  const letters = 'BCDEFGHIJKLMNOPQRSTUVWXY'.split('');
  const widths = { B: 74, C: 87, D: 124, F: 127 };
  const breaks = ['E', 'K', 'R'];
  const cells = {};
  const put = (ref, html, cls = '') => { cells[ref] = { html, cls }; };

  put('B1', 'Preisänderun'); put('C1', 'Preis', 'mid'); put('D1', 'Faktor');
  put('E1', 'Zustandszahl'); put('F1', 'Abrechnungsbrennwert');
  [['01.01.2022', '6.92', 'k-or'], ['01.10.2022', '7.69', 'k-gr'], ['01.02.2023', '11.44', 'k-bl'],
   ['01.01.2024', '9.64', 'k-br'], ['01.04.2024', '10.72', ''], ['01.01.2025', '11.87', '']].forEach(([d, p, k], i) => {
    const r = i + 2;
    put('B' + r, d, 'num ' + k); put('C' + r, p, 'num ' + k);
    put('D' + r, '10.8206904', 'num'); put('E' + r, '0.9384', 'num'); put('F' + r, '11.531', 'num');
  });
  put('I2', '0.0000', 'num'); put('L2', '0.00', 'num');
  put('B10', '10.8206904', 'num'); put('B11', '11.531', 'num'); put('B12', '0.9384', 'num');
  put('D11', '[kWh/m³]', 'mid');
  for (let r = 5; r <= 8; r++) for (const c of 'HIJ') put(c + r, '', 'yel');
  put('H5', 'Benannte Bereiche:', 'yel hd');
  [['Faktor', 'D'], ['Preis', 'C'], ['Preisänderun', 'B']].forEach(([n, c], i) => {
    put('H' + (6 + i), n, 'yel'); put('I' + (6 + i), `=$Tabelle7.$${c}$2:$${c}$7`, 'yel');
  });
  put('B13', 'Datum'); put('C13', 'Start', 'mid'); put('F13', 'Verbrauch'); put('G13', 'Kosten');
  put('F14', '[m³]', 'mid'); put('G14', '[<span class="wavy">ct</span>]', 'mid'); put('H14', 'NEU', 'mid yel');

  [['20.09.22', '06:00:00', 'Di. 20.09.2022 06:00', '0.465', '34.82', '34.82', 'k-or'],
   ['26.09.22', '06:21:00', 'Mo. 26.09.2022 06:21', '0.291', '21.79', '21.79', 'k-or'],
   ['01.10.22', '09:26:00', 'Sa. 01.10.2022 09:26', '0.941', '78.30', '78.30', 'k-gr'],
   ['04.01.23', '11:48:00', 'Mi. 04.01.2023 11:48', '5.015', '417.30', '417.30', 'k-gr'],
   ['25.01.23', '19:54:00', 'Mi. 25.01.2023 19:54', '24.445', '2034.10', '2034.10', 'k-gr'],
   ['28.01.23', '10:10:00', 'Sa. 28.01.2023 10:10', '13.057', '1616.31', '1086.49', 'k-gr'],
   ['02.02.23', '09:30:00', 'Do. 02.02.2023 09:30', '26.103', '3231.26', '3231.26', 'k-bl'],
   ['03.02.23', '09:13:00', 'Fr. 03.02.2023 09:13', '4.397', '544.30', '544.30', 'k-bl'],
   ['01.01.24', '09:26:00', 'Mo. 01.01.2024 09:26', '3.514', '366.55', '366.55', 'k-br'],
   ['02.01.24', '08:12:00', 'Di. 02.01.2024 08:12', '2.890', '301.46', '301.46', 'k-br'],
   ['30.03.24', '09:13:00', 'Sa. 30.03.2024 09:13', '2.144', '223.64', '223.64', 'k-br'],
   ['01.04.24', '09:09:00', 'Mo. 01.04.2024 09:09', '1.038', '120.41', '120.41', ''],
   ['04.11.24', '07:03:00', 'Mo. 04.11.2024 07:03', '2.116', '245.45', '245.45', '']].forEach((row, i) => {
    const r = i + 15, k = row[6];
    'BCDFGH'.split('').forEach((c, j) => put(c + r, row[j], 'num ' + k));
    put('I' + r, `=F${r}*INDEX(Preis;VERGLEICH(B${r};Preisänderung;1))*INDEX(Faktor;VERGLEICH(B${r};Preisänderung;1))`);
  });
  put('U15', 'isänderung;1))*INDEX(Faktor;VERGLEICH(B15;Preisänderung;');

  // Range markers for the references of the formula being edited
  const marker = k => `<div class="ref ${k}"><i></i><i></i><i></i><i></i></div>`;
  const over = (ref, html) => {
    const c = cells[ref] || (cells[ref] = { html: '', cls: '' });
    c.html += html; c.cls += ' host';
  };
  over('B2', marker('ref-m')); over('B15', marker('ref-r')); over('F15', marker('ref-b'));
  over('Q15', '<div class="editor">=PRODUKT(<span style="color:#00f">F15</span>;<span class="wavy">SVERWEIS</span>(<span style="color:#f00">B15</span>;<span style="color:#f0f">$B$2:$D$7</span>;{2.3};1))</div>');

  document.getElementById('cols').innerHTML = '<col style="width:37px">' +
    letters.map(l => l === 'Y' ? '<col>' : `<col style="width:${widths[l] || 74}px">`).join('');
  document.getElementById('heads').innerHTML = '<th></th>' +
    letters.map(l => `<th scope="col" class="${breaks.includes(l) ? 'brk' : ''}">${l}</th>`).join('');
  let out = '';
  for (let r = 1; r <= 27; r++) {
    out += `<tr><th scope="row">${r}</th>` + letters.map(l => {
      const c = cells[l + r] || { html: '', cls: '' };
      return `<td class="${c.cls} ${breaks.includes(l) ? 'brk' : ''}">${c.html}</td>`;
    }).join('') + '</tr>';
  }
  document.getElementById('rows').innerHTML = out;
</script>
</body>
</html>
